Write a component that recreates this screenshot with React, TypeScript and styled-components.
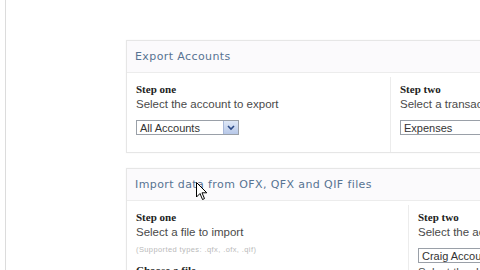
import styled, { createGlobalStyle } from 'styled-components';

const Global = createGlobalStyle`
  html, body { margin: 0; padding: 0; background: #fff; overflow: hidden; }
  body { width: 480px; height: 270px; }
`;

const Page = styled.div`
  position: relative;
  width: 480px;
  height: 270px;
  overflow: hidden;
  background: #fff;
  display: flex;
`;

const EdgeLine = styled.div`
  width: 1px;
  margin-left: 5px;
  background: #dcdcdc;
  flex-shrink: 0;
`;

const Content = styled.div`
  padding: 40px 0 0 120px;
  display: flex;
  flex-direction: column;
  gap: 15px;
  flex-shrink: 0;
`;

const Panel = styled.div`
  width: 420px;
  border: 1px solid #e6e6e6;
  border-right: none;
  background: #fff;
  box-shadow: 0 0 2px rgba(0, 0, 0, 0.04);
`;

const Header = styled.div`
  height: 31px;
  padding: 0 8px;
  display: flex;
  align-items: center;
  background: #fbfafc;
  border-bottom: 1px solid #ececec;
  font-family: "DejaVu Sans", Verdana, sans-serif;
  font-size: 11px;
  letter-spacing: 0.4px;
  color: #577392;
`;

const Cols = styled.div<{ $left: number }>`
  display: grid;
  grid-template-columns: ${p => p.$left}px 1fr;
  padding-top: 4px;
`;

const Col = styled.div<{ $divider?: boolean }>`
  padding: 5px 9px 17px;
  border-left: ${p => (p.$divider ? '1px solid #ececec' : 'none')};
  font-family: "Liberation Sans", Arial, sans-serif;
`;

const StepTitle = styled.div`
  font-family: "Liberation Serif", "Times New Roman", serif;
  font-weight: bold;
  font-size: 11px;
  color: #222;
  line-height: 14px;
`;

const StepText = styled.div<{ $gap?: number }>`
  font-size: 11.5px;
  color: #4a4a4a;
  line-height: 17px;
  margin-top: ${p => p.$gap ?? 0}px;
  white-space: nowrap;
`;

const Hint = styled.div`
  font-size: 7.5px;
  letter-spacing: 0.4px;
  color: #bababa;
  line-height: 14px;
  margin-top: 2px;
  white-space: nowrap;
`;

const Select = styled.div<{ $w: number }>`
  margin-top: 7px;
  width: ${p => p.$w}px;
  height: 13px;
  border: 1px solid #9aa0a8;
  display: flex;
  align-items: center;
  font-size: 11px;
  color: #333;
  background: #fff;
`;

const SelectLabel = styled.span`
  flex: 1;
  padding-left: 3px;
  white-space: nowrap;
  overflow: hidden;
`;

const DropBtn = styled.span`
  width: 14px;
  height: 13px;
  background: linear-gradient(#dfe8f7, #b7c8e8);
  border-left: 1px solid #a8b8d8;
  display: flex;
  align-items: center;
  justify-content: center;
`;

const Cursor = styled.svg`
  position: absolute;
  left: 196px;
  top: 182px;
`;

function Chevron() {
  return (
    <svg width="8" height="6" viewBox="0 0 8 6">
      <path d="M1 1 L4 4 L7 1" fill="none" stroke="#2c4a86" strokeWidth="1.6" />
    </svg>
  );
}

export default function App() {
  return (
    <Page>
      <Global />
      <EdgeLine />
      <Content>
        <Panel>
          <Header>Export Accounts</Header>
          <Cols $left={263}>
            <Col>
              <StepTitle>Step one</StepTitle>
              <StepText>Select the account to export</StepText>
              <Select $w={101}>
                <SelectLabel>All Accounts</SelectLabel>
                <DropBtn><Chevron /></DropBtn>
              </Select>
            </Col>
            <Col $divider>
              <StepTitle>Step two</StepTitle>
              <StepText>Select a transaction type</StepText>
              <Select $w={120}>
                <SelectLabel>Expenses</SelectLabel>
              </Select>
            </Col>
          </Cols>
        </Panel>
        <Panel>
          <Header>Import data from OFX, QFX and QIF files</Header>
          <Cols $left={281}>
            <Col>
              <StepTitle>Step one</StepTitle>
              <StepText>Select a file to import</StepText>
              <Hint>(Supported types: .qfx, .ofx, .qif)</Hint>
              <StepTitle style={{ marginTop: 6 }}>Choose a file</StepTitle>
            </Col>
            <Col $divider>
              <StepTitle>Step two</StepTitle>
              <StepText>Select the account</StepText>
              <Select $w={120}>
                <SelectLabel>Craig Accounts</SelectLabel>
              </Select>
              <StepText $gap={1}>Select the date</StepText>
            </Col>
          </Cols>
        </Panel>
      </Content>
      <Cursor width="12" height="19" viewBox="0 0 12 19">
        <path d="M0.5 0.5 L0.5 15 L4 11.5 L6.5 17.5 L8.5 16.6 L6 10.8 L10.8 10.8 Z" fill="#fff" stroke="#000" strokeWidth="1" />
      </Cursor>
    </Page>
  );
}
